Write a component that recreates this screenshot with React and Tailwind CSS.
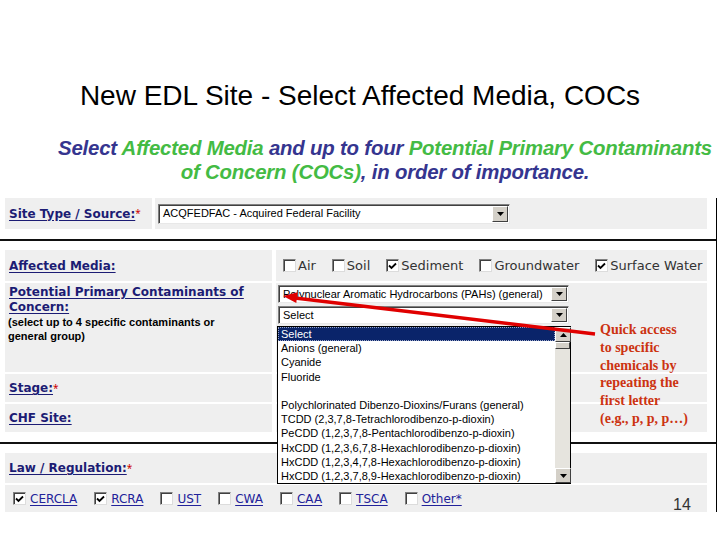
import React from "react";

const LABEL =
  "font-['DejaVu_Sans',sans-serif] text-[12px] font-bold text-[#1c1c74] underline underline-offset-[2px]";
const GRAY = "bg-[#efefef]";

const items = [
  "Select",
  "Anions (general)",
  "Cyanide",
  "Fluoride",
  "",
  "Polychlorinated Dibenzo-Dioxins/Furans (general)",
  "TCDD (2,3,7,8-Tetrachlorodibenzo-p-dioxin)",
  "PeCDD (1,2,3,7,8-Pentachlorodibenzo-p-dioxin)",
  "HxCDD (1,2,3,6,7,8-Hexachlorodibenzo-p-dioxin)",
  "HxCDD (1,2,3,4,7,8-Hexachlorodibenzo-p-dioxin)",
  "HxCDD (1,2,3,7,8,9-Hexachlorodibenzo-p-dioxin)",
];

function Box({ checked }) {
  return (
    <span className="inline-flex w-[13px] h-[13px] shrink-0 items-center justify-center bg-white border border-t-[#808080] border-l-[#808080] border-b-[#dcdcdc] border-r-[#dcdcdc] shadow-[inset_1px_1px_0_#404040]">
      {checked && (
        <svg width="9" height="8" viewBox="0 0 9 8">
          <path d="M1 3.5 L3.5 6 L8 1.5" fill="none" stroke="#000" strokeWidth="1.8" />
        </svg>
      )}
    </span>
  );
}

function Tri({ up }) {
  return (
    <svg width="7" height="4" viewBox="0 0 7 4">
      <path d={up ? "M0 4 L3.5 0 L7 4 Z" : "M0 0 L7 0 L3.5 4 Z"} fill="#000" />
    </svg>
  );
}

function ArrowBtn({ up }) {
  return (
    <div className="w-[16px] h-full shrink-0 flex items-center justify-center bg-[#d4d0c8] border border-t-white border-l-white border-b-[#404040] border-r-[#404040]">
      <Tri up={up} />
    </div>
  );
}

function Select({ text, className }) {
  return (
    <div
      className={`flex bg-white border border-t-[#808080] border-l-[#808080] border-b-[#e8e8e8] border-r-[#e8e8e8] shadow-[inset_1px_1px_0_#404040] p-[1px] ${className}`}
    >
      <div className="flex-1 pl-[3px] flex items-center font-['Liberation_Sans',sans-serif] text-[11px] text-black whitespace-nowrap overflow-hidden">
        {text}
      </div>
      <ArrowBtn />
    </div>
  );
}

function Check({ label, checked, link }) {
  return (
    <div className={`flex shrink-0 items-center whitespace-nowrap ${link ? "gap-[4px]" : "gap-[2px]"}`}>
      <Box checked={checked} />
      <span
        className={
          link
            ? "font-['DejaVu_Sans',sans-serif] text-[12px] text-[#22229a] underline underline-offset-[2px]"
            : "font-['DejaVu_Sans',sans-serif] text-[13px] text-[#333]"
        }
      >
        {label}
      </span>
    </div>
  );
}

function Req() {
  return <span className="text-[#cc0000] text-[10px] font-normal align-top no-underline inline-block">*</span>;
}

export default function App() {
  return (
    <div className="w-[720px] h-[540px] bg-white relative overflow-hidden">
      <h1 className="pt-[80px] text-center text-[28px] leading-[32px] font-['Liberation_Sans',sans-serif] text-black">
        New EDL Site - Select Affected Media, COCs
      </h1>
      <p className="mt-[24px] pl-[50px] text-center font-['Liberation_Sans',sans-serif] font-bold italic text-[20.4px] leading-[24px] tracking-[-0.2px] text-[#35358f] whitespace-nowrap">
        Select <span className="text-[#44bb44]">Affected Media</span> and up to four{" "}
        <span className="text-[#44bb44]">Potential Primary Contaminants</span>
        <br />
        <span className="text-[#44bb44]">of Concern (COCs)</span>, in order of importance.
      </p>

      {/* form screenshot */}
      <div className="mt-[14px] w-[717px] h-[314px] border-r border-black">
        <div className="ml-[5px] w-[702px] h-[31px] flex">
          <div className={`w-[147px] ${GRAY} pl-[4px] flex items-center`}>
            <span className={LABEL}>Site Type / Source:</span>
            <Req />
          </div>
          <div className={`flex-1 ml-[3px] ${GRAY} pl-[3px] flex items-center`}>
            <Select text="ACQFEDFAC - Acquired Federal Facility" className="w-[352px] h-[20px]" />
          </div>
        </div>

        <div className="mt-[10px] h-[2px] w-[716px] bg-[#111]" />

        <div className="mt-[9px] ml-[5px] w-[702px] h-[31px] flex">
          <div className={`w-[267px] ${GRAY} pl-[4px] flex items-center`}>
            <span className={LABEL}>Affected Media:</span>
          </div>
          <div className={`flex-1 ml-[4px] ${GRAY} pl-[7px] flex items-center gap-[16px]`}>
            <Check label="Air" />
            <Check label="Soil" />
            <Check label="Sediment" checked />
            <Check label="Groundwater" />
            <Check label="Surface Water" checked />
          </div>
        </div>

        <div className="mt-[2px] ml-[5px] w-[702px] h-[89px] flex">
          <div className={`w-[267px] ${GRAY} pl-[4px] pt-[2px]`}>
            <div className={`${LABEL} leading-[15px]`}>
              Potential Primary Contaminants of
              <br />
              Concern:
            </div>
            <div className="font-['Liberation_Sans',sans-serif] font-bold text-[11px] leading-[14px] text-black -ml-[1px]">
              (select up to 4 specific contaminants or
              <br />
              general group)
            </div>
          </div>
          <div className={`flex-1 ml-[4px] ${GRAY} pl-[2px] pt-[2px] flex flex-col gap-[3px]`}>
            <Select text="Polynuclear Aromatic Hydrocarbons (PAHs) (general)" className="w-[291px] h-[18px]" />
            <Select text="Select" className="w-[291px] h-[18px]" />
          </div>
        </div>

        <div className="mt-[2px] ml-[5px] w-[702px] h-[28px] flex">
          <div className={`w-[267px] ${GRAY} pl-[4px] flex items-center`}>
            <span className={LABEL}>Stage:</span>
            <Req />
          </div>
          <div className={`flex-1 ml-[4px] ${GRAY}`} />
        </div>

        <div className="mt-[2px] ml-[5px] w-[702px] h-[28px] flex">
          <div className={`w-[267px] ${GRAY} pl-[4px] flex items-center`}>
            <span className={LABEL}>CHF Site:</span>
          </div>
          <div className={`flex-1 ml-[4px] ${GRAY}`} />
        </div>

        <div className="mt-[10px] h-[2px] w-[716px] bg-[#111]" />

        <div className={`mt-[9px] ml-[5px] w-[702px] h-[30px] ${GRAY} pl-[4px] flex items-center`}>
          <span className={LABEL}>Law / Regulation:</span>
          <Req />
        </div>

        <div className={`mt-[2px] ml-[5px] w-[702px] h-[27px] ${GRAY} pl-[8px] flex items-center gap-[17px]`}>
          <Check link label="CERCLA" checked />
          <Check link label="RCRA" checked />
          <Check link label="UST" />
          <Check link label="CWA" />
          <Check link label="CAA" />
          <Check link label="TSCA" />
          <Check link label="Other*" />
        </div>
      </div>

      {/* open listbox */}
      <div className="absolute left-[277px] top-[326px] w-[294px] h-[158px] bg-white border border-black flex">
        <div className="flex-1 flex flex-col font-['Liberation_Sans',sans-serif] text-[11px] text-black">
          {items.map((t, i) => (
            <div
              key={i}
              className={`h-[14.3px] leading-[14.3px] pl-[3px] whitespace-nowrap overflow-hidden ${
                i === 0 ? "bg-[#0a246a] text-white outline-1 outline-dotted outline-[#9aa6c8] -outline-offset-1" : ""
              }`}
            >
              {t}
            </div>
          ))}
        </div>
        <div className="w-[15px] flex flex-col bg-[#e6e4de]">
          <div className="h-[15px]">
            <ArrowBtn up />
          </div>
          <div className="h-[7px] bg-[#d4d0c8] border border-t-white border-l-white border-b-[#404040] border-r-[#404040]" />
          <div className="flex-1" />
          <div className="h-[15px]">
            <ArrowBtn />
          </div>
        </div>
      </div>

      {/* annotation */}
      <div className="absolute left-[600px] top-[321px] font-['Liberation_Serif',serif] font-bold text-[14px] leading-[17.8px] text-[#cc3311]">
        Quick access
        <br />
        to specific
        <br />
        chemicals by
        <br />
        repeating the
        <br />
        first letter
        <br />
        (e.g., p, p, p…)
      </div>

      <svg className="absolute left-0 top-0 pointer-events-none" width="720" height="540" viewBox="0 0 720 540">
        <line x1="595" y1="334" x2="295" y2="298" stroke="#e00000" strokeWidth="3.5" />
        <polygon points="283,296 297.5,292.2 296.3,303" fill="#e00000" />
      </svg>

      <div className="absolute left-[673px] top-[496px] font-['Liberation_Sans',sans-serif] text-[16px] leading-[18px] text-[#333]">
        14
      </div>
    </div>
  );
}
